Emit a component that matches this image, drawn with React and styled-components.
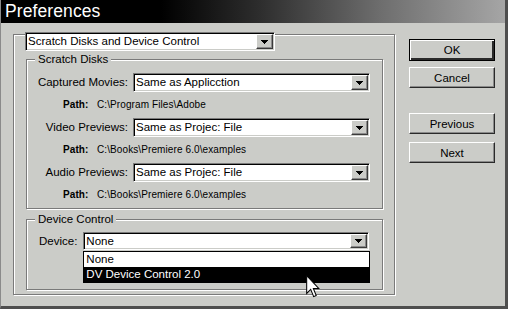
import React from "react";
import styled, { createGlobalStyle } from "styled-components";

const BG = "#cbccc8";

const Global = createGlobalStyle`
  html, body { margin: 0; padding: 0; background: ${BG}; }
  body { font-family: "Liberation Sans", Arial, sans-serif; }
`;

const Window = styled.div`
  position: relative;
  box-sizing: border-box;
  width: 508px;
  height: 309px;
  background: ${BG};
  border-left: 1px solid #8a8a8a;
  border-right: 3px solid #4e4e4e;
  border-bottom: 3px solid #4e4e4e;
  overflow: hidden;
  font-family: "Liberation Sans", Arial, sans-serif;
  color: #000;
`;

const TitleBar = styled.div`
  height: 23px;
  background: linear-gradient(
    to right,
    #000 0px,
    #000 160px,
    #2e2e2e 260px,
    #6e6e6e 380px,
    #a6a6a6 505px
  );
  display: flex;
  align-items: center;
  padding-left: 4px;
`;

const Title = styled.div`
  color: #fff;
  font-size: 17.5px;
  line-height: 23px;
  letter-spacing: 0.1px;
`;

const Body = styled.div`
  display: flex;
  align-items: flex-start;
  gap: 14px;
  padding: 11px 0 0 12px;
`;

const Panel = styled.div`
  box-sizing: border-box;
  width: 382px;
  height: 261px;
  padding: 0 11px 0 12px;
  border: 1px solid #7a7a7a;
  box-shadow: inset 1px 1px 0 #fff, 1px 1px 0 #fff;
`;

const SelectBox = styled.div`
  display: flex;
  box-sizing: border-box;
  width: ${(p) => p.$w}px;
  height: ${(p) => p.$h}px;
  margin: ${(p) => p.$m || "0"};
  padding: 1px;
  background: #fff;
  border: 1px solid;
  border-color: #7a7a7a #fff #fff #7a7a7a;
  box-shadow: inset 1px 1px 0 #000, inset -1px -1px 0 ${BG};
`;

const SelectText = styled.div`
  flex: 1;
  padding-left: 1px;
  font-size: 11.5px;
  line-height: ${(p) => p.$lh}px;
  white-space: nowrap;
  overflow: hidden;
`;

const ArrowBtn = styled.div`
  box-sizing: border-box;
  width: 17px;
  height: 100%;
  background: ${BG};
  border: 1px solid;
  border-color: #fff #3a3a3a #3a3a3a #fff;
  box-shadow: inset -1px -1px 0 #8a8a8a;
  display: flex;
  align-items: center;
  justify-content: center;
`;

const Group = styled.div`
  box-sizing: border-box;
  height: ${(p) => p.$h}px;
  margin-top: ${(p) => p.$mt}px;
  border: 1px solid #7a7a7a;
  box-shadow: inset 1px 1px 0 #fff, 1px 1px 0 #fff;
`;

const Legend = styled.div`
  width: fit-content;
  margin: -8px 0 0 8px;
  padding: 0 3px;
  background: ${BG};
  font-size: 11.5px;
  line-height: 14px;
`;

const FieldRow = styled.div`
  display: grid;
  grid-template-columns: 101px 237px;
  column-gap: 5px;
  margin-top: ${(p) => p.$mt}px;
`;

const FieldLabel = styled.div`
  text-align: right;
  font-size: 11.5px;
  line-height: 19px;
  white-space: nowrap;
`;

const PathLine = styled.div`
  display: flex;
  height: 14px;
  margin: 6px 0 6px 36px;
  font-size: 10px;
  line-height: 14px;
  letter-spacing: 0.1px;
  white-space: nowrap;
`;

const PathLabel = styled.span`
  width: 34px;
  font-weight: bold;
`;

const DeviceRow = styled.div`
  display: flex;
  align-items: center;
  gap: 6px;
  margin-top: 6px;
  padding-left: 12px;
`;

const DeviceLabel = styled.div`
  font-size: 11.5px;
  line-height: 18px;
`;

const DropWrap = styled.div`
  position: relative;
`;

const DropList = styled.div`
  position: absolute;
  z-index: 2;
  top: calc(100% + 1px);
  left: 0;
  box-sizing: border-box;
  width: 287px;
  border: 1px solid #000;
  background: #fff;
`;

const DropItem = styled.div`
  height: 15px;
  line-height: 15px;
  padding-left: 2px;
  font-size: 11.5px;
  background: ${(p) => (p.$selected ? "#000" : "#fff")};
  color: ${(p) => (p.$selected ? "#fff" : "#000")};
`;

const ButtonColumn = styled.div`
  display: flex;
  flex-direction: column;
  margin-top: 5px;
  width: 86px;
`;

const Button = styled.div`
  box-sizing: border-box;
  height: ${(p) => (p.$default ? 22 : 21)}px;
  margin-top: ${(p) => p.$mt || 0}px;
  background: ${BG};
  border: 1px solid;
  border-color: ${(p) =>
    p.$default ? "#000" : "#fff #2a2a2a #2a2a2a #fff"};
  box-shadow: ${(p) =>
    p.$default
      ? "inset 1px 1px 0 #fff, inset -2px -2px 0 #2a2a2a"
      : "inset -1px -1px 0 #8a8a8a"};
  display: flex;
  align-items: center;
  justify-content: center;
  font-size: 11.5px;
`;

const Cursor = styled.svg`
  position: absolute;
  left: 305px;
  top: 275px;
  z-index: 3;
`;

const Triangle = () => (
  <svg width="7" height="4" viewBox="0 0 7 4" shapeRendering="crispEdges">
    <rect x="0" y="0" width="7" height="1" fill="#000" />
    <rect x="1" y="1" width="5" height="1" fill="#000" />
    <rect x="2" y="2" width="3" height="1" fill="#000" />
    <rect x="3" y="3" width="1" height="1" fill="#000" />
  </svg>
);

const Select = ({ w, h, m, children }) => (
  <SelectBox $w={w} $h={h} $m={m}>
    <SelectText $lh={h - 4}>{children}</SelectText>
    <ArrowBtn>
      <Triangle />
    </ArrowBtn>
  </SelectBox>
);

const rows = [
  { label: "Captured Movies:", value: "Same as Applicction", path: "C:\\Program Files\\Adobe" },
  { label: "Video Previews:", value: "Same as Projec: File", path: "C:\\Books\\Premiere 6.0\\examples" },
  { label: "Audio Previews:", value: "Same as Projec: File", path: "C:\\Books\\Premiere 6.0\\examples" },
];

export default function App() {
  return (
    <>
      <Global />
      <Window>
        <TitleBar>
          <Title>Preferences</Title>
        </TitleBar>
        <Body>
          <Panel>
            <Select w={250} h={19} m="-3px 0 0 -1px">
              Scratch Disks and Device Control
            </Select>
            <Group $h={150} $mt={8}>
              <Legend>Scratch Disks</Legend>
              {rows.map((r, i) => (
                <React.Fragment key={r.label}>
                  <FieldRow $mt={i === 0 ? 7 : 0}>
                    <FieldLabel>{r.label}</FieldLabel>
                    <Select w={237} h={19}>
                      {r.value}
                    </Select>
                  </FieldRow>
                  <PathLine>
                    <PathLabel>Path:</PathLabel>
                    <span>{r.path}</span>
                  </PathLine>
                </React.Fragment>
              ))}
            </Group>
            <Group $h={71} $mt={10}>
              <Legend>Device Control</Legend>
              <DeviceRow>
                <DeviceLabel>Device:</DeviceLabel>
                <DropWrap>
                  <Select w={286} h={18}>
                    None
                  </Select>
                  <DropList>
                    <DropItem>None</DropItem>
                    <DropItem $selected>DV Device Control 2.0</DropItem>
                  </DropList>
                </DropWrap>
              </DeviceRow>
            </Group>
          </Panel>
          <ButtonColumn>
            <Button $default>OK</Button>
            <Button $mt={6}>Cancel</Button>
            <Button $mt={25}>Previous</Button>
            <Button $mt={8}>Next</Button>
          </ButtonColumn>
        </Body>
        <Cursor width="14" height="23" viewBox="0 0 12 20">
          <path
            d="M0.5 0.5 L0.5 16 L4 12.5 L6.6 18.8 L8.8 17.9 L6.3 11.7 L11 11.7 Z"
            fill="#fff"
            stroke="#000"
            strokeWidth="0.9"
            strokeLinejoin="miter"
          />
        </Cursor>
      </Window>
    </>
  );
}
